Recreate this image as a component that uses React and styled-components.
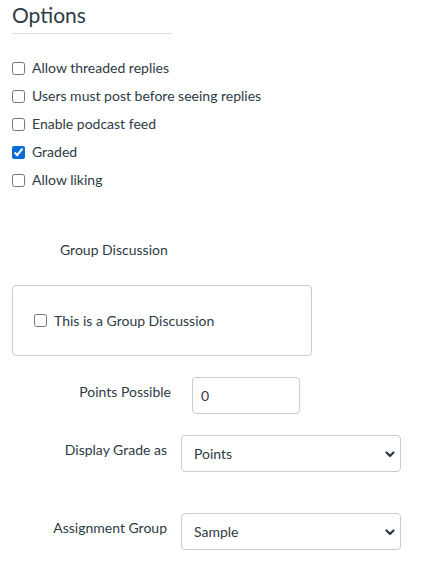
import React from 'react';
import styled, { createGlobalStyle } from 'styled-components';

const GlobalStyle = createGlobalStyle`
  body {
    margin: 0;
    background: #fff;
    font-family: Lato, "Open Sans", sans-serif;
    color: #2d3b45;
  }
`;

const options = [
  { id: 'threaded', label: 'Allow threaded replies', checked: false },
  { id: 'must_post', label: 'Users must post before seeing replies', checked: false },
  { id: 'podcast', label: 'Enable podcast feed', checked: false },
  { id: 'graded', label: 'Graded', checked: true },
  { id: 'liking', label: 'Allow liking', checked: false },
];

function Chevron() {
  return (
    <ChevronIcon width="10" height="8" viewBox="0 0 10 8" aria-hidden="true">
      <path d="M1.5 2.5 L5 6 L8.5 2.5" fill="none" stroke="#2d3b45" strokeWidth="2.2" strokeLinecap="round" strokeLinejoin="round" />
    </ChevronIcon>
  );
}

function App() {
  return (
    <Page>
      <GlobalStyle />
      <Heading>Options</Heading>
      <CheckList>
        {options.map((opt) => (
          <CheckRow key={opt.id} htmlFor={opt.id}>
            <Checkbox type="checkbox" id={opt.id} defaultChecked={opt.checked} />
            {opt.label}
          </CheckRow>
        ))}
      </CheckList>

      <GroupTitle>Group Discussion</GroupTitle>
      <GroupBox>
        <CheckRow htmlFor="group">
          <Checkbox type="checkbox" id="group" />
          This is a Group Discussion
        </CheckRow>
      </GroupBox>

      <FormRow $top={21}>
        <FormLabel htmlFor="points" $edge={171}>Points Possible</FormLabel>
        <TextInput id="points" type="text" defaultValue="0" $offset={21} />
      </FormRow>

      <FormRow $top={21}>
        <FormLabel htmlFor="grade_as">Display Grade as</FormLabel>
        <SelectWrap>
          <Select id="grade_as" defaultValue="points">
            <option value="points">Points</option>
            <option value="percent">Percentage</option>
            <option value="letter">Letter Grade</option>
          </Select>
          <Chevron />
        </SelectWrap>
      </FormRow>

      <FormRow $top={41}>
        <FormLabel htmlFor="group_select">Assignment Group</FormLabel>
        <SelectWrap>
          <Select id="group_select" defaultValue="sample">
            <option value="sample">Sample</option>
            <option value="assignments">Assignments</option>
          </Select>
          <Chevron />
        </SelectWrap>
      </FormRow>
    </Page>
  );
}

const Page = styled.div`
  padding: 0 12px 20px 12px;
  font-size: 14px;
`;

const Heading = styled.h2`
  margin: 0;
  width: 160px;
  padding-top: 1px;
  height: 32px;
  font-size: 21px;
  font-weight: 400;
  line-height: 27px;
  border-bottom: 1px solid #dddddd;
`;

const CheckList = styled.div`
  display: flex;
  flex-direction: column;
  margin-top: 20px;
`;

const CheckRow = styled.label`
  display: flex;
  align-items: center;
  height: 28px;
  line-height: 28px;
  cursor: pointer;
`;

const Checkbox = styled.input`
  width: 13px;
  height: 13px;
  margin: 0 7px 0 0;
  accent-color: #0b6bd7;
`;

const GroupTitle = styled.div`
  margin-top: 42px;
  padding-left: 48px;
  height: 28px;
  line-height: 28px;
`;

const GroupBox = styled.div`
  box-sizing: border-box;
  width: 300px;
  height: 71px;
  margin-top: 21px;
  padding: 0 21px;
  display: flex;
  align-items: center;
  border: 1px solid #c7cdd1;
  border-radius: 4px;
`;

const FormRow = styled.div`
  display: flex;
  align-items: flex-start;
  margin-top: ${(p) => p.$top}px;
`;

const FormLabel = styled.label`
  box-sizing: border-box;
  width: ${(p) => (p.$edge || 167) - 12}px;
  padding-top: 5px;
  line-height: 20px;
  text-align: right;
  flex-shrink: 0;
`;

const fieldBase = `
  box-sizing: border-box;
  height: 37px;
  border: 1px solid #c7cdd1;
  border-radius: 4px;
  background: #fff;
  color: #2d3b45;
  font-family: Lato, "Open Sans", sans-serif;
  font-size: 14px;
`;

const TextInput = styled.input`
  ${fieldBase}
  width: 108px;
  margin-left: ${(p) => p.$offset}px;
  padding: 0 8px;
  outline: none;
`;

const SelectWrap = styled.div`
  position: relative;
  margin-left: 14px;
  width: 220px;
`;

const Select = styled.select`
  ${fieldBase}
  width: 100%;
  padding: 0 28px 0 12px;
  appearance: none;
  -webkit-appearance: none;
  outline: none;
`;

const ChevronIcon = styled.svg`
  position: absolute;
  right: 6px;
  top: 15px;
  pointer-events: none;
`;

export default App;
